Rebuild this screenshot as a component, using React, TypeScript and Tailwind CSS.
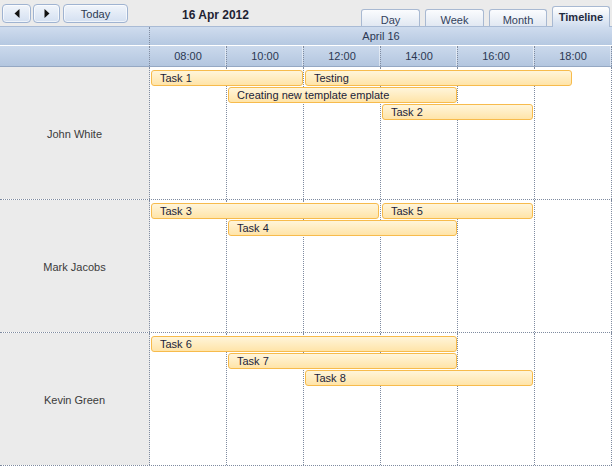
import React from "react";

type Ev = { label: string; x1: number; x2: number; slot: number };

const rows: { name: string; events: Ev[] }[] = [
  {
    name: "John White",
    events: [
      { label: "Task 1", x1: 151, x2: 302, slot: 0 },
      { label: "Testing", x1: 305, x2: 571, slot: 0 },
      { label: "Creating new template emplate", x1: 228, x2: 456, slot: 1 },
      { label: "Task 2", x1: 382, x2: 532, slot: 2 },
    ],
  },
  {
    name: "Mark Jacobs",
    events: [
      { label: "Task 3", x1: 151, x2: 378, slot: 0 },
      { label: "Task 5", x1: 382, x2: 532, slot: 0 },
      { label: "Task 4", x1: 228, x2: 456, slot: 1 },
    ],
  },
  {
    name: "Kevin Green",
    events: [
      { label: "Task 6", x1: 151, x2: 456, slot: 0 },
      { label: "Task 7", x1: 228, x2: 456, slot: 1 },
      { label: "Task 8", x1: 305, x2: 532, slot: 2 },
    ],
  },
];

const hours = ["08:00", "10:00", "12:00", "14:00", "16:00", "18:00"];

function Arrow({ dir }: { dir: "l" | "r" }) {
  return (
    <svg width="6" height="9" viewBox="0 0 6 9">
      {dir === "l" ? (
        <path d="M5.5 0 L0.5 4.5 L5.5 9 Z" fill="#111" />
      ) : (
        <path d="M0.5 0 L5.5 4.5 L0.5 9 Z" fill="#111" />
      )}
    </svg>
  );
}

const btn =
  "h-[19px] flex items-center justify-center rounded-[4px] border border-[#9fb3d1] bg-linear-to-b from-[#f1f5fb] to-[#d4e0f1] shadow-[inset_0_0_0_1px_#ffffffa0]";

const tab =
  "h-[17px] flex items-center justify-center rounded-t-[3px] border border-b-0 border-[#a8b9d2] bg-linear-to-b from-[#fbfcfe] to-[#e1e8f2] text-[#33425c] text-[11px] leading-[14px] pt-[4px]";

export default function App() {
  return (
    <div className="w-[612px] h-[467px] bg-white overflow-hidden font-['Liberation_Sans',Arial,sans-serif] text-[11px] leading-[14px] flex flex-col">
      {/* toolbar */}
      <div className="h-[26px] shrink-0 bg-[#ebebeb] flex items-start">
        <div className="flex gap-[2px] pl-[2px] pt-[4px]">
          <div className={`${btn} w-[29px]`}>
            <Arrow dir="l" />
          </div>
          <div className={`${btn} w-[27px]`}>
            <Arrow dir="r" />
          </div>
          <div className={`${btn} w-[65px] ml-[1px] text-[#2c3a52]`}>Today</div>
        </div>
        <div className="ml-[54px] pt-[8px] text-[12px] font-bold text-[#1f2333]">16 Apr 2012</div>
        <div className="ml-auto self-end flex items-end gap-[5px] pr-[2px]">
          <div className={`${tab} w-[59px]`}>Day</div>
          <div className={`${tab} w-[59px]`}>Week</div>
          <div className={`${tab} w-[58px]`}>Month</div>
          <div className="relative z-10 -mb-[1px] h-[21px] w-[58px] flex justify-center rounded-t-[3px] border border-b-0 border-[#a8b9d2] bg-linear-to-b from-[#ffffff] to-[#cfdcee] pt-[3px] font-bold text-[#1f2a40] text-[11px] leading-[14px]">
            Timeline
          </div>
        </div>
      </div>

      {/* header */}
      <div className="shrink-0 border-t border-[#a9bbd5] bg-linear-to-b from-[#cfdcee] to-[#b5c8e1] border-b border-b-white flex h-[20px]">
        <div className="w-[150px] border-r border-dotted border-r-[#7f8ba0]" />
        <div className="flex-1 flex items-center justify-center text-[#2b3853]">April 16</div>
      </div>
      <div className="shrink-0 h-[21px] bg-linear-to-b from-[#cbd9ec] to-[#b3c6df] border-b border-[#95a8c3] flex">
        <div className="w-[150px] border-r border-dotted border-r-[#7f8ba0]" />
        {hours.map((h) => (
          <div
            key={h}
            className="w-[77px] flex items-center justify-center border-r border-dotted border-r-[#7f8ba0] shadow-[inset_-1px_0_0_#ffffff80] text-[#2b3853]"
          >
            {h}
          </div>
        ))}
      </div>

      {/* body */}
      <div className="flex flex-col">
        {rows.map((r) => (
          <div key={r.name} className="relative h-[133px] flex border-b border-dotted border-b-[#7f8ba0]">
            <div className="w-[150px] shrink-0 bg-[#ebebeb] border-r border-dotted border-r-[#7f8ba0] flex items-center justify-center text-[#3a3a3a] pt-[2px]">
              {r.name}
            </div>
            {hours.map((h) => (
              <div key={h} className="w-[77px] shrink-0 border-r border-dotted border-r-[#7f8ba0]" />
            ))}
            {r.events.map((e) => (
              <div
                key={e.label}
                className="absolute h-[16px] rounded-[3px] border border-[#f7bb4c] bg-linear-to-b from-[#fff5da] to-[#ffe4a8] pl-[8px] text-[#1b1d3a] whitespace-nowrap overflow-hidden"
                style={{ left: e.x1, width: e.x2 - e.x1 + 1, top: 3 + e.slot * 17 }}
              >
                {e.label}
              </div>
            ))}
          </div>
        ))}
      </div>
    </div>
  );
}
